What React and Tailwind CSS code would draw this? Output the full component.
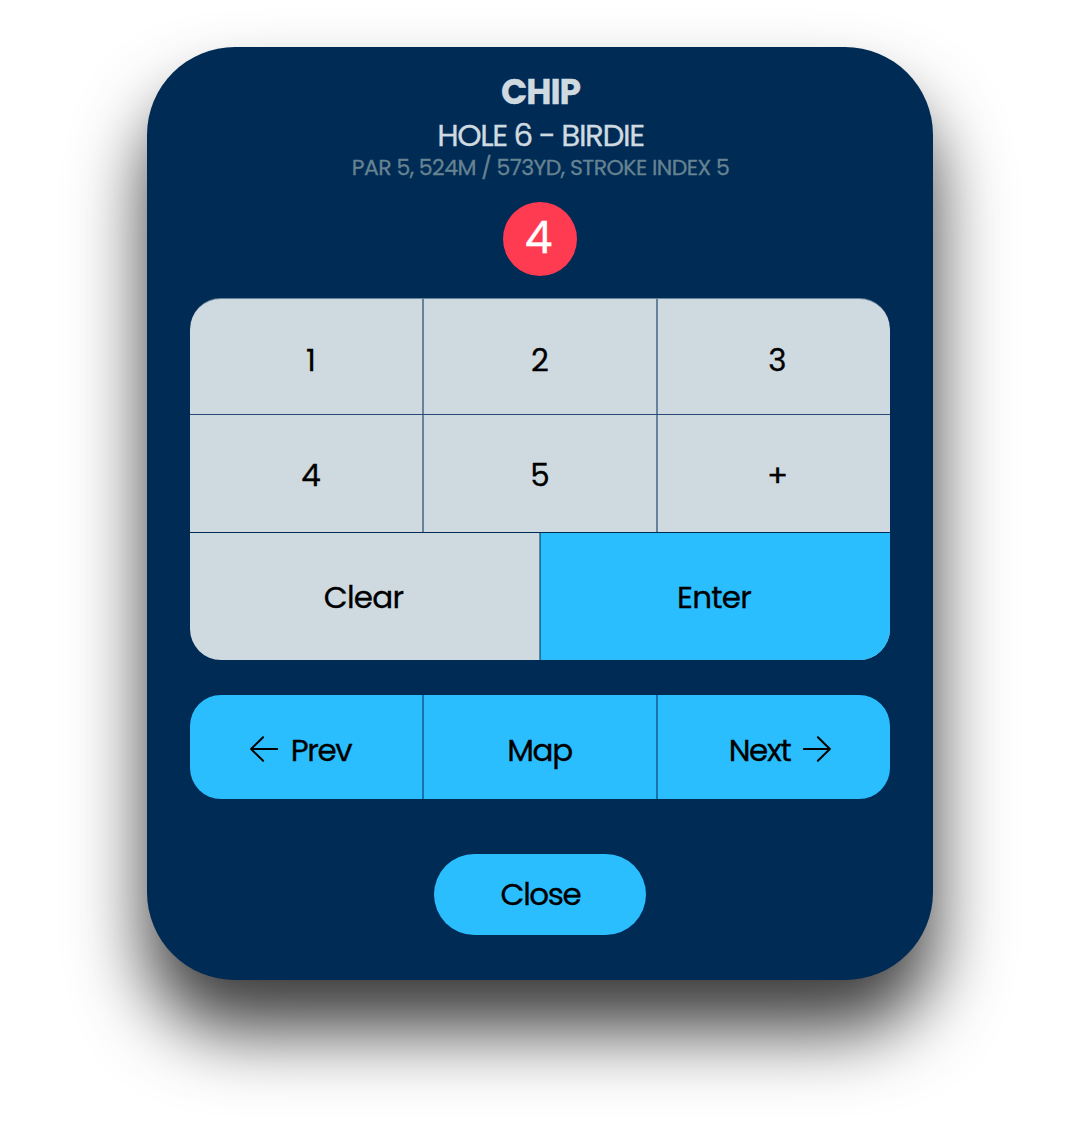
import React from 'react';

const KEYS = [
  { label: '1', className: 'border-r-2 pl-2.5' },
  { label: '2', className: 'border-r-2' },
  { label: '3', className: 'pl-[7px]' },
];
const KEYS_2 = [
  { label: '4', className: 'border-r-2 pl-2.5' },
  { label: '5', className: 'border-r-2' },
  { label: '+', className: 'pl-[7px]' },
];

function Arrow({ right }) {
  return (
    <svg width="30" height="26" viewBox="0 0 30 26" fill="none" stroke="#000" strokeWidth="2" strokeLinecap="round" strokeLinejoin="round"
         className={right ? '-mt-0.5 rotate-180' : '-mt-0.5'}>
      <path d="M28.2 13H2.1M14.1 1.2L2.1 13l12 11.8" />
    </svg>
  );
}

function KeyRow({ keys, className }) {
  return (
    <div className={`grid grid-cols-[234px_234px_232px] ${className}`}>
      {keys.map(k => (
        <button key={k.label} className={`flex items-center justify-center border-[#002b55]/50 text-[31px] leading-none ${k.className}`}>
          {k.label}
        </button>
      ))}
    </div>
  );
}

export default function App() {
  const [score] = React.useState(4);

  return (
    <div className="flex h-[1144px] w-[1080px] justify-center overflow-hidden bg-white pt-[47px] font-['Poppins','Inter',sans-serif] text-black [-webkit-text-stroke:0.3px]">
      <div className="flex h-[933px] w-[786px] flex-col items-center rounded-[88px] bg-[#002b55] shadow-[0_50px_73px_rgba(0,0,0,0.77)]">
        <div className="mt-[25px] pl-px text-[34.5px] leading-10 font-bold tracking-[-1px] text-[#cfdae0]">CHIP</div>
        <div className="mt-1.5 pl-px text-[31px] leading-[34px] tracking-[-1.4px] text-[#cfdae0]">HOLE 6 - BIRDIE</div>
        <div className="mt-1 pl-px text-[22px] leading-6 tracking-[-0.55px] text-[#668391]">PAR 5, 524M / 573YD, STROKE INDEX 5</div>

        <div className="mt-[22px] flex size-[74px] items-center justify-center rounded-full bg-[#ff3b52] pr-[3px] text-[44px] leading-none text-white">
          <span className="-mt-0.5">{score}</span>
        </div>

        <div className="mt-[22px] h-[362px] w-[700px] overflow-hidden rounded-[31px] border-t border-[#002b55]/50 bg-[#cfdae0]">
          <KeyRow keys={KEYS} className="h-[115px] *:pt-[7px]" />
          <div className="h-px bg-[#27497a]" />
          <KeyRow keys={KEYS_2} className="h-[117px] *:pt-[3px]" />
          <div className="h-px bg-[#002b55]" />
          <div className="grid h-[127px] grid-cols-2 text-[31px] leading-none tracking-[-0.8px]">
            <button className="flex items-center justify-center border-r border-[#002b55]/50 pt-px pr-0.5">Clear</button>
            <button className="flex items-center justify-center border-l border-[#002b55]/50 bg-[#2abeff] pt-px pr-[3px]">Enter</button>
          </div>
        </div>

        <div className="mt-[35px] grid h-[104px] w-[700px] grid-cols-[234px_234px_232px] overflow-hidden rounded-[31px] bg-[#2abeff] text-[31px] leading-none tracking-[-1.4px]">
          <button className="flex items-center justify-center gap-3 border-r-2 border-[#002b55]/50 pt-1.5 pr-3">
            <Arrow />
            Prev
          </button>
          <button className="flex items-center justify-center border-r-2 border-[#002b55]/50 pt-1.5 pr-px">Map</button>
          <button className="flex items-center justify-center gap-3 pt-1.5 pl-[13px]">
            Next
            <Arrow right />
          </button>
        </div>

        <button className="mt-[55px] flex h-[81px] w-[212px] items-center justify-center rounded-full bg-[#2abeff] pl-px text-[31px] leading-none tracking-[-1.4px]">
          Close
        </button>
      </div>
    </div>
  );
}
